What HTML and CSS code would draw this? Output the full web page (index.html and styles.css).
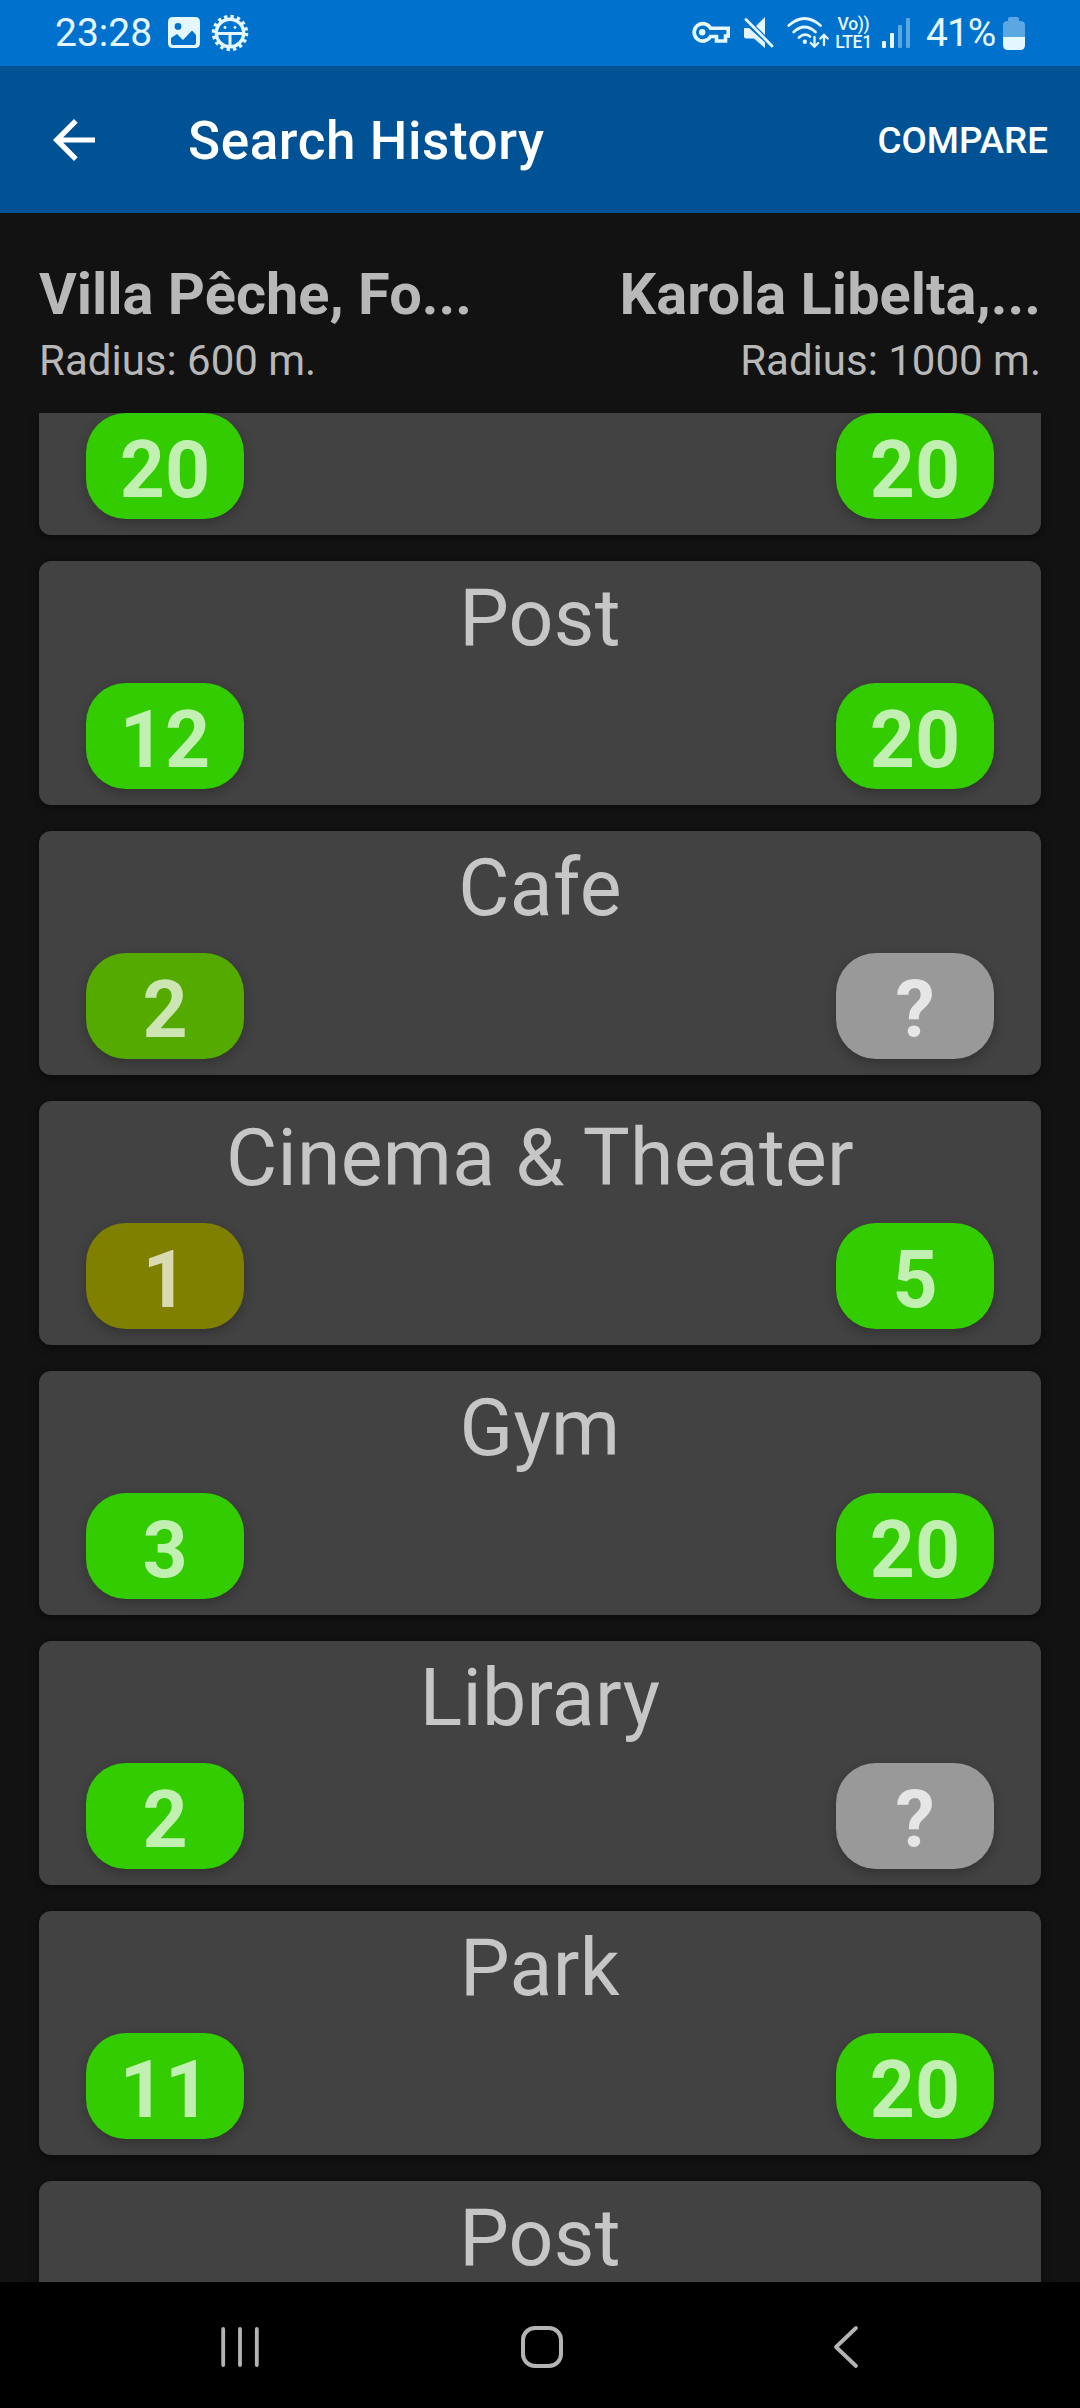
FILE: index.html
```html
<!DOCTYPE html>
<html lang="en">
<head>
<meta charset="utf-8">
<title>Search History</title>
<link rel="stylesheet" href="styles.css">
</head>
<body>
<div class="screen">
  <div class="status">
    <span class="clock">23:28</span>
    <svg class="ic-image" width="32" height="32" viewBox="0 0 32 32"><path fill="currentColor" fill-rule="evenodd" d="M5 0H27Q32 0 32 5V26Q32 31 27 31H5Q0 31 0 26V5Q0 0 5 0ZM10 6A3.4 3.4 0 1 0 10 12.800A3.400 3.400 0 1 0 10 6ZM3 21V26Q3 28 5 28H26Q28 28 28 26V18L24 13.500L15 23L9 17Z"/></svg>
    <svg class="ic-gear" width="38" height="38" viewBox="0 0 38 38" fill="none" stroke="currentColor"><circle cx="19" cy="19" r="13.700" stroke-width="3.400"/><circle cx="19" cy="19" r="16.500" stroke-width="3.500" stroke-dasharray="3.300 3.180"/><path d="M5 19.500H33M19 20V34" stroke-width="3"/><circle cx="14" cy="13.500" r="1.400" fill="currentColor" stroke="none"/><circle cx="24" cy="13.500" r="1.400" fill="currentColor" stroke="none"/></svg>
    <span class="spacer"></span>
    <svg class="ic-key" width="38" height="24" viewBox="0 0 38 24" fill="none" stroke="currentColor" stroke-width="3.600"><path d="M18.500 7.200H36.200V15H33.500V20H24.500V15.500H18.500A8.700 8.700 0 1 1 18.500 7.200Z"/><circle cx="10.200" cy="11.300" r="3.200" fill="currentColor" stroke="none"/></svg>
    <svg class="ic-mute" width="31" height="32" viewBox="0 0 31 32" fill="currentColor"><path d="M22 0V18L13 9ZM1 11H6L22 25.500V31L11 21.500H3Q1 21.500 1 19.500Z"/><path d="M3 2.500L29 29" stroke="currentColor" stroke-width="2.800" stroke-linecap="round"/></svg>
    <svg class="ic-wifi" width="42" height="32" viewBox="0 0 42 32" fill="none" stroke="currentColor" stroke-width="2.700" stroke-linecap="round"><path d="M1.800 8.500Q17.500-5.500 33.500 8.500M6.700 15Q17.500 5 28.500 15M12 20.500Q17.500 15.500 23 19.500"/><circle cx="17.800" cy="24.800" r="2.200" fill="currentColor" stroke="none"/><path d="M27.500 20V29M23.800 26L27.500 29.700L31.200 26M37 28V18.500M33.300 21.500L37 17.800L40.700 21.500" stroke-width="2.300"/></svg>
    <span class="volte"><span>Vo))</span><span>LTE1</span></span>
    <svg class="ic-signal" width="29" height="30" viewBox="0 0 29 30" fill="currentColor"><rect x="0" y="23" width="4" height="7" rx="1"/><rect x="8" y="15" width="4" height="15" rx="1"/><rect x="16" y="7" width="4" height="23" rx="1" opacity=".4"/><rect x="24" y="0" width="4" height="30" rx="1" opacity=".4"/></svg>
    <span class="percent">41%</span>
    <svg class="ic-battery" width="22" height="33" viewBox="0 0 22 33" fill="currentColor"><path opacity=".4" d="M7 0H14Q16 0 16 2V4H17Q22 4 22 8V20H0V8Q0 4 5 4H5V2Q5 0 7 0Z"/><path d="M0 20H22V28Q22 33 17 33H5Q0 33 0 28Z"/></svg>
  </div>
  <div class="appbar">
    <svg class="ic-back" width="42" height="42" viewBox="0 0 42 42" fill="currentColor"><path d="M42 18.400H10.100L24.700 3.700L21 0L0 21L21 42L24.700 38.300L10.100 23.600H42Z"/></svg>
    <span class="title">Search History</span>
    <span class="spacer"></span>
    <span class="compare">COMPARE</span>
  </div>
  <div class="places">
    <div class="place"><span class="name">Villa Pêche, Fo...</span><span class="radius">Radius: 600 m.</span></div>
    <div class="place right"><span class="name">Karola Libelta,...</span><span class="radius">Radius: 1000 m.</span></div>
  </div>
  <div class="list">
    <div class="card cut"><div class="scores"><span class="badge">20</span><span class="badge">20</span></div></div>
    <div class="card"><div class="label">Post</div><div class="scores"><span class="badge">12</span><span class="badge">20</span></div></div>
    <div class="card"><div class="label">Cafe</div><div class="scores"><span class="badge fair">2</span><span class="badge unknown">?</span></div></div>
    <div class="card"><div class="label">Cinema &amp; Theater</div><div class="scores"><span class="badge low">1</span><span class="badge">5</span></div></div>
    <div class="card"><div class="label">Gym</div><div class="scores"><span class="badge">3</span><span class="badge">20</span></div></div>
    <div class="card"><div class="label">Library</div><div class="scores"><span class="badge">2</span><span class="badge unknown">?</span></div></div>
    <div class="card"><div class="label">Park</div><div class="scores"><span class="badge">11</span><span class="badge">20</span></div></div>
    <div class="card last"><div class="label">Post</div></div>
  </div>
  <div class="nav">
    <svg width="40" height="42" viewBox="0 0 40 42" stroke="currentColor" stroke-width="3.800" stroke-linecap="round"><path d="M3.200 3V39M20 3V39M36.800 3V39"/></svg>
    <svg class="home" width="42" height="42" viewBox="0 0 42 42" fill="none" stroke="currentColor" stroke-width="4"><rect x="2" y="2" width="38" height="38" rx="12"/></svg>
    <svg width="26" height="44" viewBox="0 0 26 44" fill="none" stroke="currentColor" stroke-width="3.800" stroke-linecap="round" stroke-linejoin="round"><path d="M23 3L3 22L23 41"/></svg>
  </div>
</div>
</body>
</html>
```
FILE: styles.css
```css
* { box-sizing: border-box; }
body { margin: 0; background: #121212; font-family: Roboto, "Liberation Sans", sans-serif; }
svg { display: block; flex: none; }
span { white-space: nowrap; }
.screen { width: 1080px; height: 2408px; display: flex; flex-direction: column; overflow: hidden; }
.spacer { flex: 1; }

.status { flex: none; height: 66px; padding: 0 55px 0 55px; display: flex; align-items: center; background: #0072ce; color: #e4f7ff; }
.clock { width: 113px; font-size: 39px; line-height: 66px; }
.ic-gear { margin-left: 11px; }
.ic-mute { margin-left: 13px; }
.ic-wifi { margin-left: 13px; }
.volte { width: 39px; margin-left: 5px; display: flex; flex-direction: column; align-items: center; font-size: 17.500px; font-weight: 500; line-height: 18px; letter-spacing: -.3px; }
.ic-signal { margin-left: 9px; }
.percent { width: 77px; margin-left: 15px; font-size: 39px; line-height: 66px; letter-spacing: -1px; }

.appbar { flex: none; height: 147px; padding: 0 32px 0 53px; display: flex; align-items: center; background: #005294; color: #fff; font-weight: 500; }
.title { margin-left: 93px; padding-top: 3px; font-size: 53px; line-height: 144px; letter-spacing: .6px; }
.compare { padding-top: 2px; font-size: 36.750px; line-height: 145px; }

.places { flex: none; height: 200px; padding: 45px 39px 0; display: flex; justify-content: space-between; color: #b8b8b8; }
.place { display: flex; flex-direction: column; }
.right { align-items: flex-end; }
.name { font-size: 57.750px; font-weight: 700; line-height: 72px; }
.radius { font-size: 42px; line-height: 61px; }

.list { flex: none; height: 1869px; padding: 0 39px; display: flex; flex-direction: column; gap: 26px; overflow: hidden; }
.card { flex: none; height: 244px; border-radius: 12px; background: #424242; box-shadow: 0 2px 8px rgba(0, 0, 0, .5); }
.cut { height: 122px; border-radius: 0 0 12px 12px; }
.label { height: 122px; font-size: 78.750px; line-height: 114px; letter-spacing: .3px; text-align: center; color: #c6c6c6; }
.scores { padding: 0 47px; display: flex; justify-content: space-between; }
.badge { width: 158px; height: 106px; border-radius: 40px; background: #33cc00; color: #c2f0b2; font-size: 78.750px; font-weight: 700; line-height: 114px; text-align: center; box-shadow: 0 4px 12px rgba(0, 0, 0, .25); }
.fair { background: #55aa00; color: #cce5b2; }
.low { background: #808000; color: #d9d9b2; }
.unknown { background: #999; color: #e6e6e6; }

.nav { flex: none; height: 126px; padding: 4px 0 0 220px; display: flex; align-items: center; background: #000; color: #b4b4b4; }
.home { margin: 0 270px 0 261px; }
```
